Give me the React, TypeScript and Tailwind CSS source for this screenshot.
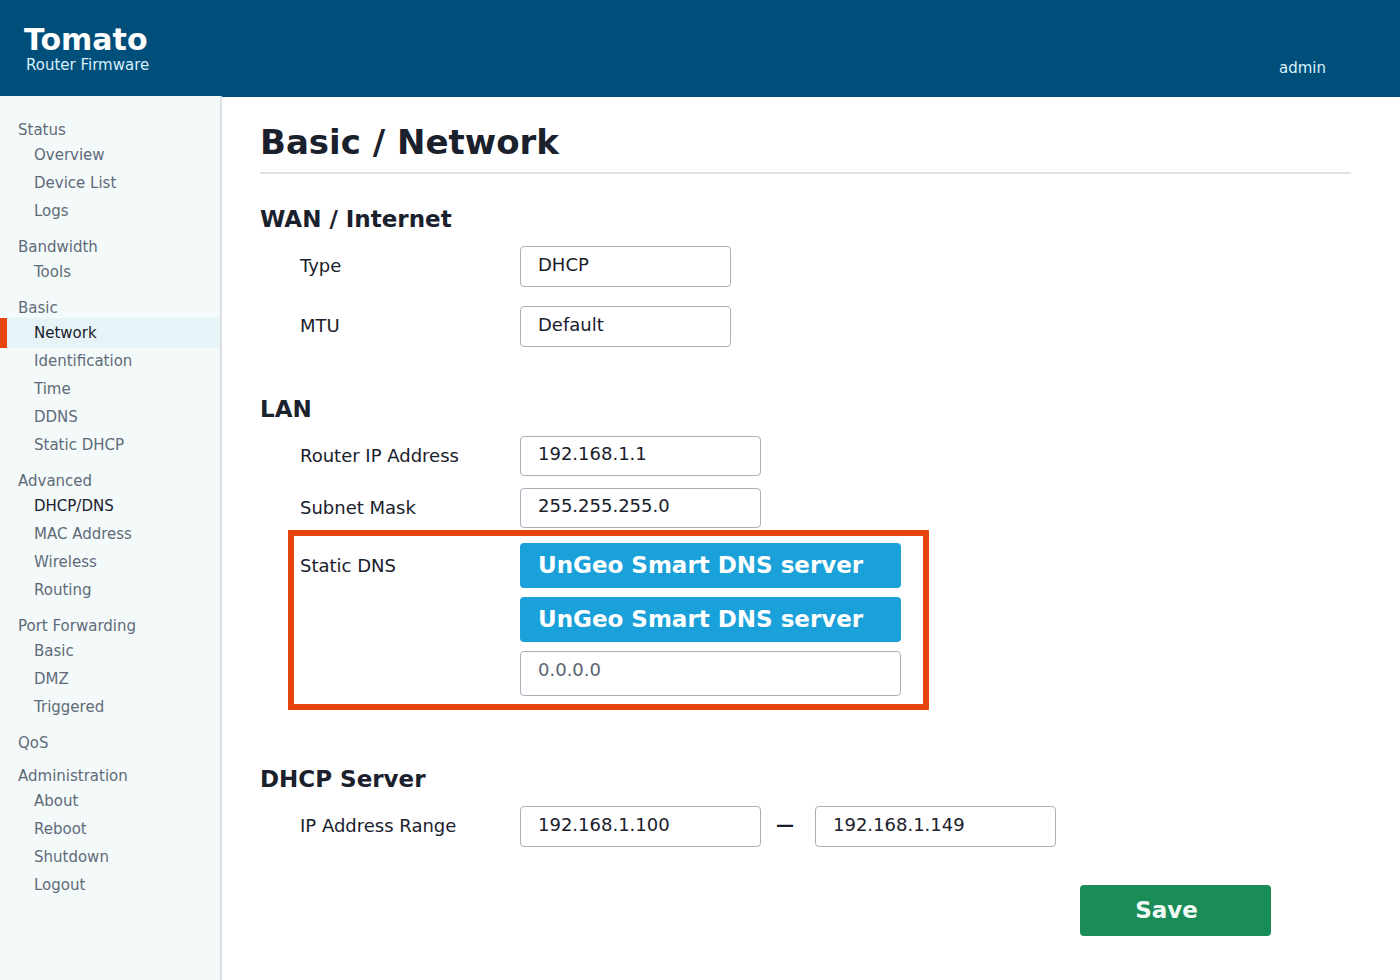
const navSections = [
  { title: 'Status', items: ['Overview', 'Device List', 'Logs'] },
  { title: 'Bandwidth', items: ['Tools'] },
  { title: 'Basic', items: ['Network', 'Identification', 'Time', 'DDNS', 'Static DHCP'] },
  { title: 'Advanced', items: ['DHCP/DNS', 'MAC Address', 'Wireless', 'Routing'] },
  { title: 'Port Forwarding', items: ['Basic', 'DMZ', 'Triggered'] },
  { title: 'QoS', items: [] },
  { title: 'Administration', items: ['About', 'Reboot', 'Shutdown', 'Logout'] },
];

const Sidebar = () => (
  <aside className="w-[222px] shrink-0 border-r-2 border-[#d8dfe6] bg-[#f4f9fa] pt-[23px] -mt-px">
    {navSections.map((section) => (
      <div key={section.title} className="mb-[11px]">
        <div className="h-[22px] pl-[18px] text-[15px] leading-[22px] text-[#5f6b78]">{section.title}</div>
        {section.items.map((item) => {
          const active = section.title === 'Basic' && item === 'Network';
          const current = item === 'DHCP/DNS';
          if (active) {
            return (
              <div
                key={item}
                className="-my-px flex h-[30px] items-center border-l-[7px] border-[#e8440f] bg-[#e6f4f7] pl-[27px] text-[15px] text-[#1a202c]"
              >
                {item}
              </div>
            );
          }
          return (
            <div
              key={item}
              className={`flex h-[28px] items-center pl-[34px] text-[15px] ${current ? 'text-[#1a202c]' : 'text-[#5f6b78]'}`}
            >
              {item}
            </div>
          );
        })}
      </div>
    ))}
  </aside>
);

const Field = ({ value, className, muted }: { value: string; className: string; muted?: boolean }) => (
  <div
    className={`rounded-[4px] border border-[#a8b0ba] bg-white pl-[17px] text-[18px] ${muted ? 'text-[#5a6472]' : 'text-[#1a202c]'} ${className}`}
  >
    {value}
  </div>
);

const Row = ({ label, className, children }: { label: string; className: string; children: React.ReactNode }) => (
  <div className={`flex items-center ${className}`}>
    <div className="w-[260px] pb-[2px] pl-[40px] text-[18px] text-[#1a202c]">{label}</div>
    {children}
  </div>
);

const DnsButton = ({ label }: { label: string }) => (
  <div className="flex h-[45px] w-[381px] items-center rounded-[4px] bg-[#1ba1da] pl-[18px] text-[23px] font-bold text-white">
    {label}
  </div>
);

export default function App() {
  return (
    <div className="flex min-h-[980px] flex-col overflow-hidden bg-white font-['DejaVu_Sans',sans-serif]">
      <header className="flex h-[97px] shrink-0 items-start justify-between bg-[#004e7a] text-white">
        <div className="pl-[24px] pt-[24px]">
          <div className="text-[30px] font-bold leading-[32px]">Tomato</div>
          <div className="pl-[2px] text-[15px] leading-[18px] text-[#d7f0fb]">Router Firmware</div>
        </div>
        <div className="pr-[74px] pt-[59px] text-[15px] leading-[18px] text-[#d7f0fb]">admin</div>
      </header>
      <div className="flex h-[883px]">
        <Sidebar />
        <main className="flex-1 pl-[38px] pr-[49px]">
          <h1 className="mt-[22px] h-[55px] border-b-2 border-[#dde2e8] text-[34px] font-bold leading-[46px] text-[#1a202c]">
            Basic / Network
          </h1>
          <h2 className="mt-[30px] text-[23px] font-bold leading-[30px] text-[#1a202c]">WAN / Internet</h2>
          <Row label="Type" className="mt-[12px] h-[41px]">
            <Field value="DHCP" className="h-[41px] w-[211px] leading-[35px]" />
          </Row>
          <Row label="MTU" className="mt-[19px] h-[41px]">
            <Field value="Default" className="h-[41px] w-[211px] leading-[35px]" />
          </Row>

          <h2 className="mt-[47px] text-[23px] font-bold leading-[30px] text-[#1a202c]">LAN</h2>
          <Row label="Router IP Address" className="mt-[12px] h-[40px]">
            <Field value="192.168.1.1" className="h-[40px] w-[241px] leading-[34px]" />
          </Row>
          <Row label="Subnet Mask" className="mt-[12px] h-[40px]">
            <Field value="255.255.255.0" className="h-[40px] w-[241px] leading-[34px]" />
          </Row>

          <div className="ml-[28px] mt-[2px] flex h-[180px] w-[641px] border-[6px] border-[#e8440f] pl-[6px] pt-[7px]">
            <div className="w-[220px] pt-[9px] text-[18px] leading-[27px] text-[#1a202c]">Static DNS</div>
            <div className="flex flex-col gap-[9px]">
              <DnsButton label="UnGeo Smart DNS server" />
              <DnsButton label="UnGeo Smart DNS server" />
              <Field value="0.0.0.0" muted className="h-[45px] w-[381px] leading-[35px]" />
            </div>
          </div>

          <h2 className="mt-[54px] text-[23px] font-bold leading-[30px] text-[#1a202c]">DHCP Server</h2>
          <Row label="IP Address Range" className="mt-[12px] h-[41px]">
            <Field value="192.168.1.100" className="h-[41px] w-[241px] leading-[35px]" />
            <div className="w-[54px] pb-[4px] pl-[15px] text-[18px] font-bold text-[#1a202c]">—</div>
            <Field value="192.168.1.149" className="h-[41px] w-[241px] leading-[35px]" />
          </Row>
          <div className="mt-[38px] flex">
            <div className="ml-[820px] flex h-[51px] w-[191px] items-center justify-center rounded-[4px] bg-[#1a8c58] pr-[18px] text-[23px] font-bold text-[#f2fbf6]">
              Save
            </div>
          </div>
        </main>
      </div>
    </div>
  );
}
